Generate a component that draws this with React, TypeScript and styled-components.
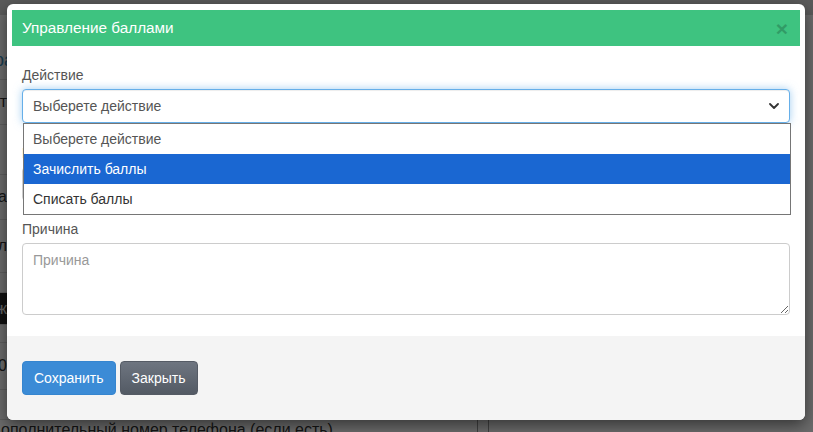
import React from "react";
import styled, { createGlobalStyle } from "styled-components";

const GlobalStyle = createGlobalStyle`
  html, body {
    margin: 0;
    padding: 0;
    height: 100%;
    overflow: hidden;
  }
  body {
    font-family: "Liberation Sans", Arial, sans-serif;
    font-size: 14px;
    color: #333;
    background: #fff;
  }
  * {
    box-sizing: border-box;
  }
`;

/* ---------- page behind the modal ---------- */

const Page = styled.div`
  position: relative;
  width: 813px;
  height: 432px;
  overflow: hidden;
  background: #fff;
`;

const TopBar = styled.div`
  height: 15px;
  background: #d6d6d6;
`;

const Rows = styled.div`
  display: flex;
  flex-direction: column;
  width: 478px;
`;

const Row = styled.div<{ $h: number; $dark?: boolean; $end?: boolean }>`
  height: ${(p) => p.$h}px;
  display: flex;
  align-items: ${(p) => (p.$end ? "flex-end" : "center")};
  padding-bottom: ${(p) => (p.$end ? "8px" : "0")};
  border-bottom: 1px solid #ddd;
  background: ${(p) => (p.$dark ? "#2a2a2a" : "transparent")};
`;

const RowLabel = styled.span<{ $blue?: boolean; $light?: boolean }>`
  width: 68px;
  margin-left: -61px;
  text-align: right;
  white-space: nowrap;
  font-size: ${(p) => (p.$blue ? "18px" : "16px")};
  color: ${(p) => (p.$blue ? "#3c8dbc" : p.$light ? "#eee" : "#333")};
`;

const BottomRow = styled.div`
  display: grid;
  grid-template-columns: 478px 11px 1fr;
  height: 40px;
`;

const BottomText = styled.div`
  margin-left: -10px;
  padding-top: 1px;
  font-size: 16px;
  color: #333;
  white-space: nowrap;
  border-right: 1px solid #999;
`;

const Divider = styled.div`
  border-right: 1px solid #999;
`;

const Avatars = styled.div`
  display: flex;
  gap: 6px;
  padding: 12px 0 0 65px;
`;

const Avatar = styled.span<{ $c: string; $w?: number }>`
  width: ${(p) => p.$w ?? 24}px;
  height: 24px;
  border-radius: 50%;
  background: ${(p) => p.$c};
  flex: none;
`;

/* ---------- modal ---------- */

const Backdrop = styled.div`
  position: absolute;
  inset: 0;
  background: rgba(0, 0, 0, 0.58);
  padding: 4px 8px 0 7px;
`;

const Dialog = styled.div`
  background: #fff;
  border-radius: 6px;
  box-shadow: 0 5px 15px rgba(0, 0, 0, 0.5);
`;

const Header = styled.div`
  margin: 0 5px;
  padding: 0 12px 0 10px;
  position: relative;
  top: 6px;
  height: 36px;
  background: #3ec380;
  display: flex;
  align-items: center;
  justify-content: space-between;
`;

const Title = styled.h4`
  margin: 0;
  font-size: 15.3px;
  font-weight: normal;
  color: #fff;
`;

const Close = styled.button`
  border: none;
  background: none;
  padding: 0;
  font-family: "Liberation Sans", Arial, sans-serif;
  font-size: 21px;
  font-weight: bold;
  line-height: 1;
  color: #000;
  opacity: 0.2;
  cursor: pointer;
`;

const Body = styled.div`
  padding: 25px 15px 21px 15px;
`;

const FormGroup = styled.div<{ $mb?: number }>`
  margin-bottom: ${(p) => p.$mb ?? 15}px;
  position: relative;
`;

const Label = styled.label`
  display: block;
  margin-bottom: 4px;
  line-height: 20px;
  font-size: 14px;
  color: #555;
`;

const SelectWrap = styled.div`
  position: relative;
`;

const SelectBox = styled.div`
  height: 34px;
  padding: 0 10px;
  display: flex;
  align-items: center;
  justify-content: space-between;
  border: 1px solid #66afe9;
  border-radius: 4px;
  color: #555;
  font-size: 14px;
  background: #fff;
  box-shadow: inset 0 1px 1px rgba(0, 0, 0, 0.075),
    0 0 8px rgba(102, 175, 233, 0.6);
`;

const Options = styled.ul`
  position: absolute;
  top: 100%;
  left: 1px;
  width: 100%;
  margin: 0;
  padding: 0;
  list-style: none;
  background: #fff;
  border: 1px solid #767676;
  z-index: 10;
`;

const Option = styled.li<{ $active?: boolean; $muted?: boolean }>`
  height: 30px;
  padding-left: 9px;
  display: flex;
  align-items: center;
  font-size: 14px;
  background: ${(p) => (p.$active ? "#1a67d2" : "#fff")};
  color: ${(p) => (p.$active ? "#fff" : p.$muted ? "#555" : "#333")};
`;

const Input = styled.input`
  display: block;
  width: 100%;
  height: 34px;
  padding: 6px 10px;
  border: 1px solid #ccc;
  border-radius: 4px;
  font-family: inherit;
  font-size: 14px;
`;

const TextArea = styled.textarea`
  display: block;
  width: 100%;
  height: 72px;
  padding: 6px 10px;
  border: 1px solid #ccc;
  border-radius: 4px;
  font-family: "Liberation Sans", Arial, sans-serif;
  font-size: 14px;
  line-height: 20px;
  color: #555;
  resize: vertical;
  outline: none;

  &::placeholder {
    color: #999;
  }
`;

const Footer = styled.div`
  background: #f4f4f4;
  padding: 25px 15px;
  display: flex;
  gap: 4px;
  border-radius: 0 0 6px 6px;
`;

const Button = styled.button<{ $variant: "primary" | "default" }>`
  height: 34px;
  padding: 0 11px;
  border: 1px solid
    ${(p) => (p.$variant === "primary" ? "#3585cf" : "#555b65")};
  border-radius: 4px;
  font-family: "Liberation Sans", Arial, sans-serif;
  font-size: 14px;
  color: #fff;
  background: ${(p) =>
    p.$variant === "primary"
      ? "#3b8bd6"
      : "linear-gradient(to bottom, #6e7580, #535a64)"};
  cursor: pointer;
`;

const Chevron = () => (
  <svg width="10" height="6" viewBox="0 0 10 6" fill="none">
    <path
      d="M1 1l4 4 4-4"
      stroke="#333"
      strokeWidth="1.8"
      strokeLinecap="round"
      strokeLinejoin="round"
    />
  </svg>
);

const avatarColors = [
  "#4f6f86",
  "#6b7378",
  "#3f8a5c",
  "#5f7a70",
  "#2e6b34",
  "#70767c",
  "#1f1f8f",
  "#6c5d8c",
  "#5d7c88",
];

function App() {
  return (
    <>
      <GlobalStyle />
      <Page>
        <TopBar />
        <Rows>
          <Row $h={65} $end>
            <RowLabel $blue>Регистрация</RowLabel>
          </Row>
          <Row $h={45}>
            <RowLabel>Текст</RowLabel>
          </Row>
          <Row $h={50} />
          <Row $h={45}>
            <RowLabel>Дата</RowLabel>
          </Row>
          <Row $h={53}>
            <RowLabel>Отдел</RowLabel>
          </Row>
          <Row $h={20} />
          <Row $h={32} $dark>
            <RowLabel $light>Тираж</RowLabel>
          </Row>
          <Row $h={18} />
          <Row $h={47}>
            <RowLabel>100</RowLabel>
          </Row>
          <Row $h={30} />
        </Rows>
        <BottomRow>
          <BottomText>Дополнительный номер телефона (если есть)</BottomText>
          <Divider />
          <Avatars>
            {avatarColors.map((c, i) => (
              <Avatar key={i} $c={c} $w={i === 6 ? 30 : 24} />
            ))}
          </Avatars>
        </BottomRow>

        <Backdrop>
          <Dialog>
            <Header>
              <Title>Управление баллами</Title>
              <Close aria-label="Закрыть">×</Close>
            </Header>
            <Body>
              <FormGroup $mb={20}>
                <Label>Действие</Label>
                <SelectWrap>
                  <SelectBox>
                    <span>Выберете действие</span>
                    <Chevron />
                  </SelectBox>
                  <Options>
                    <Option $muted>Выберете действие</Option>
                    <Option $active>Зачислить баллы</Option>
                    <Option>Списать баллы</Option>
                  </Options>
                </SelectWrap>
              </FormGroup>
              <FormGroup $mb={18}>
                <Label>Баллы</Label>
                <Input type="number" />
              </FormGroup>
              <FormGroup $mb={0}>
                <Label>Причина</Label>
                <TextArea placeholder="Причина" />
              </FormGroup>
            </Body>
            <Footer>
              <Button $variant="primary">Сохранить</Button>
              <Button $variant="default">Закрыть</Button>
            </Footer>
          </Dialog>
        </Backdrop>
      </Page>
    </>
  );
}

export default App;
